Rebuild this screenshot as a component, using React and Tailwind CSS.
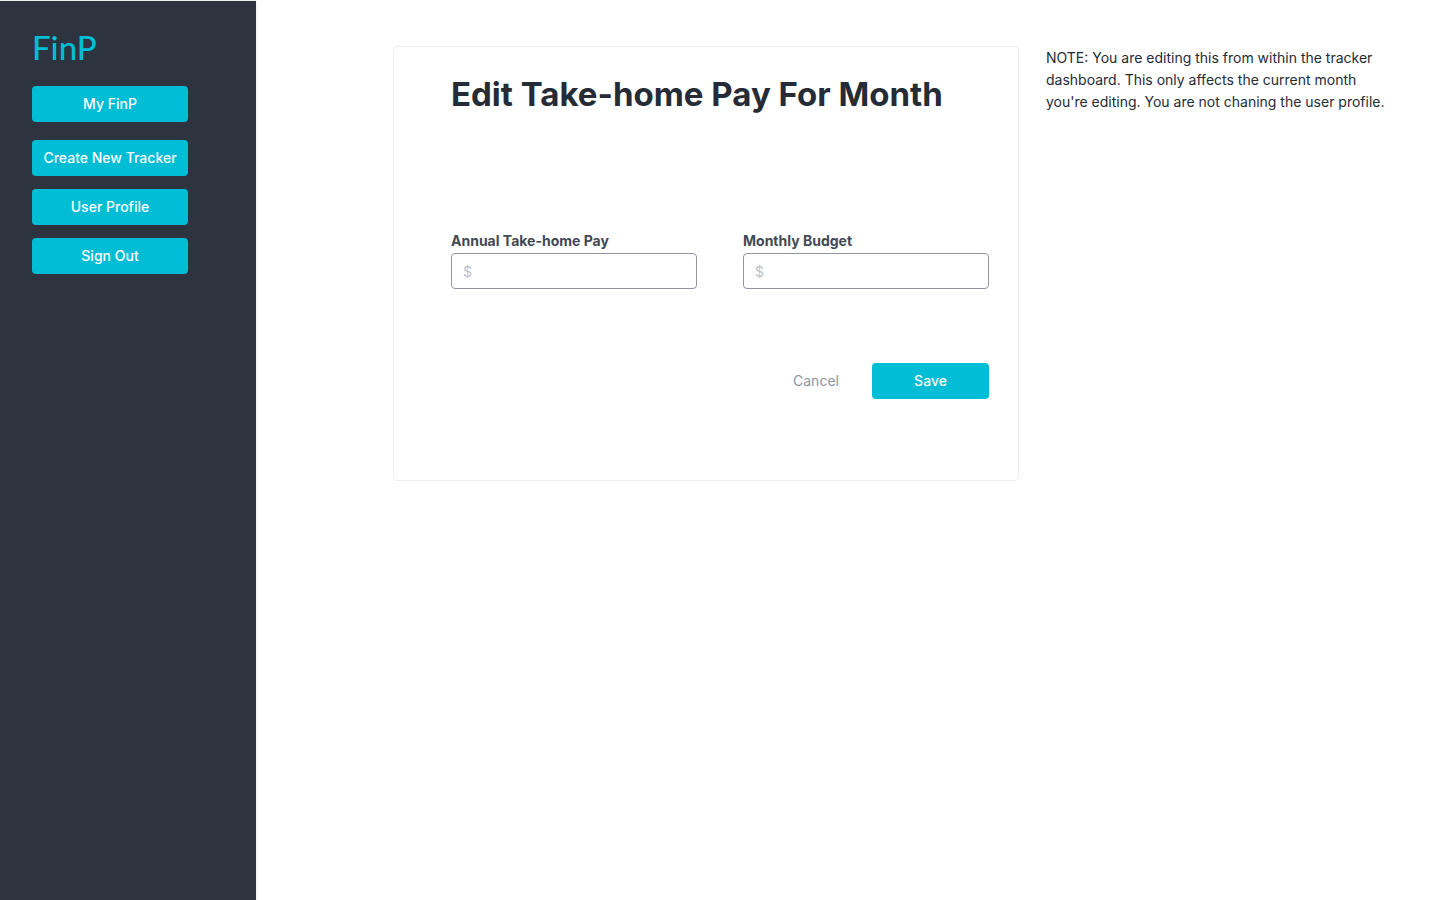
const navItems = ["Create New Tracker", "User Profile", "Sign Out"];

function PrimaryButton({ children, className = "", type = "button" }) {
  return (
    <button
      type={type}
      className={`h-9 cursor-pointer rounded bg-[#00bdd6] text-center text-sm font-medium whitespace-nowrap text-white ${className}`}
    >
      {children}
    </button>
  );
}

function Sidebar() {
  return (
    <aside className="flex w-64 shrink-0 flex-col border-t border-[#e8f3f1] bg-[#2e3340] px-8 pt-6 shadow-sm">
      <a href="#home" className="font-['Lato',sans-serif] text-[33px] leading-11 font-medium text-[#00bdd6]">
        FinP
      </a>
      <nav aria-label="Main" className="mt-[17px] flex w-39 flex-col gap-[18px]">
        <PrimaryButton>My FinP</PrimaryButton>
        <div className="flex flex-col gap-[13px]">
          {navItems.map((item) => (
            <PrimaryButton key={item}>{item}</PrimaryButton>
          ))}
        </div>
      </nav>
    </aside>
  );
}

function MoneyField({ id, label }) {
  return (
    <div className="flex flex-col">
      <label htmlFor={id} className="text-sm leading-6 font-bold text-[#424955]">
        {label}
      </label>
      <input
        id={id}
        type="text"
        inputMode="decimal"
        placeholder="$"
        className="h-9 w-full rounded border border-[#9095a1] bg-white px-[11px] text-sm text-[#171a1f] outline-none placeholder:text-[#bcc1ca]"
      />
    </div>
  );
}

export default function App() {
  return (
    <div className="flex min-h-screen bg-white font-['Inter',sans-serif]">
      <Sidebar />
      <main className="flex flex-1 items-start gap-[27px] pt-[46px] pr-[50px] pl-[137px]">
        <form
          onSubmit={(event) => event.preventDefault()}
          className="flex-1 rounded border border-[#eeeff1] bg-white pt-[23px] pr-[29px] pb-[81px] pl-[57px]"
        >
          <h1 className="text-[33px] leading-12 font-bold whitespace-nowrap text-[#252c36]">
            Edit Take-home Pay For Month
          </h1>
          <div className="mt-[111px] grid grid-cols-2 gap-[46px]">
            <MoneyField id="annual-pay" label="Annual Take-home Pay" />
            <MoneyField id="monthly-budget" label="Monthly Budget" />
          </div>
          <div className="mt-[74px] flex justify-end">
            <button type="button" className="h-9 w-[112px] cursor-pointer rounded text-sm text-[#9095a1]">
              Cancel
            </button>
            <PrimaryButton type="submit" className="w-[117px]">
              Save
            </PrimaryButton>
          </div>
        </form>
        <p className="w-[344px] shrink-0 pt-px text-sm leading-[22px] text-[#252c36]">
          NOTE: You are editing this from within the tracker dashboard. This only affects the current month you're
          editing. You are not chaning the user profile.
        </p>
      </main>
    </div>
  );
}
